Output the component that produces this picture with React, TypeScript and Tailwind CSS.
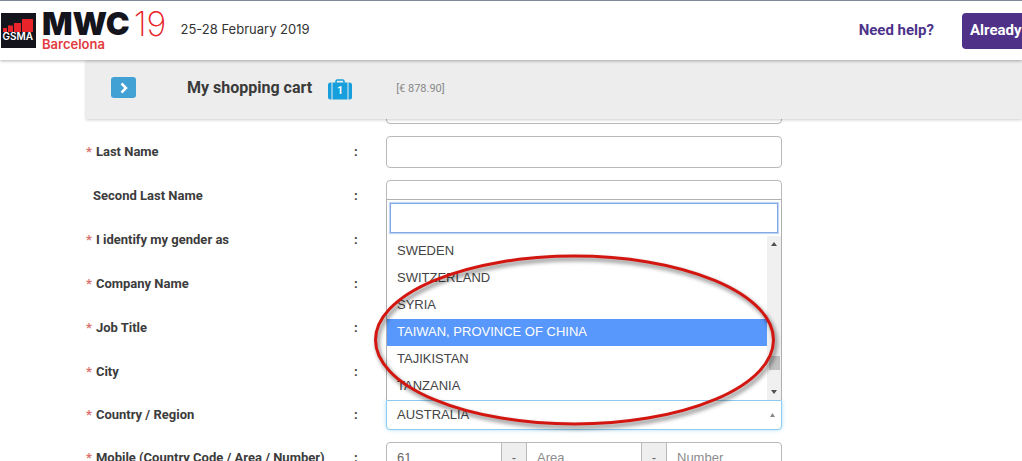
import React, { useState } from 'react';

interface FieldRowProps {
  label: string;
  htmlFor: string;
  required?: boolean;
  children?: React.ReactNode;
}

const countries = [
  'SWEDEN',
  'SWITZERLAND',
  'SYRIA',
  'TAIWAN, PROVINCE OF CHINA',
  'TAJIKISTAN',
  'TANZANIA',
];

const inputClass =
  'block h-8 w-full rounded border border-[#b9b9b9] bg-white px-2.5 text-[13px] text-[#555] outline-none placeholder:text-[#8c8c8c]';

const GsmaLogo: React.FC = () => (
  <svg width="35" height="35" viewBox="0 0 35 35" className="shrink-0" aria-hidden="true">
    <rect width="35" height="35" fill="#14141c" />
    <rect x="2" y="15" width="4" height="4" fill="#e8232a" />
    <rect x="7" y="12.500" width="5" height="6.500" fill="#e8232a" />
    <rect x="13" y="10" width="7" height="9" fill="#e8232a" />
    <rect x="21" y="6" width="11" height="13" fill="#e8232a" />
    <text x="1.5" y="27" fontFamily="Inter, sans-serif" fontSize="10" fontWeight="600" fill="#fff">GSMA</text>
  </svg>
);

const Suitcase: React.FC = () => (
  <svg width="24" height="21" viewBox="0 0 24 21" className="shrink-0" role="img" aria-label="1 item">
    <path d="M8 4V2.2Q8 1 9.2 1h5.6Q16 1 16 2.2V4" fill="none" stroke="#169fdc" strokeWidth="1.500" />
    <path d="M3.500 3.500v17H2.500Q0 20.500 0 18V6Q0 3.500 2.500 3.500z" fill="#169fdc" />
    <rect x="4.500" y="3.500" width="15" height="17" fill="#169fdc" />
    <path d="M20.500 3.500v17h1Q24 20.500 24 18V6Q24 3.500 21.500 3.500z" fill="#169fdc" />
    <text x="12" y="15" textAnchor="middle" fontFamily="Roboto, sans-serif" fontSize="10" fontWeight="700" fill="#fff">1</text>
  </svg>
);

const FieldRow: React.FC<FieldRowProps> = ({ label, htmlFor, required = true, children }) => (
  <div className="flex items-center">
    <div className="flex w-[300px] shrink-0 items-center text-[13px] font-bold text-[#3c3c3c]">
      <label htmlFor={htmlFor} className={required ? 'w-[268px]' : 'w-[268px] pl-[7px]'}>
        {required && <span className="mr-1 text-[#d9706c]">*</span>}
        {label}
      </label>
      <span>:</span>
    </div>
    <div className="relative min-w-0 max-w-[396px] flex-1">{children}</div>
  </div>
);

const CountryField: React.FC = () => {
  const [selected, setSelected] = useState('TAIWAN, PROVINCE OF CHINA');
  const [search, setSearch] = useState('');

  const filtered = countries.filter(c => c.toLowerCase().includes(search.toLowerCase()));

  return (
    <>
      <button
        id="country"
        type="button"
        aria-haspopup="listbox"
        aria-expanded="true"
        className="flex h-[30px] w-full items-center justify-between rounded-b border border-[#8ccbee] bg-white pl-2.5 pr-1.5 text-[13px] text-[#444] shadow-[0_0_4px_#b5e0f7]"
      >
        <span>AUSTRALIA</span>
        <svg width="5" height="4" viewBox="0 0 5 4" aria-hidden="true">
          <path d="M0 4L2.500 0L5 4z" fill="#888" />
        </svg>
      </button>

      <div className="absolute bottom-full left-0 z-10 w-full border border-b-0 border-[#b0b0b0] bg-white">
        <div className="p-[3px]">
          <input
            type="text"
            aria-label="Search country"
            value={search}
            onChange={e => setSearch(e.target.value)}
            className="block h-[30px] w-full border border-[#7fa9e4] px-2 text-[13px] shadow-[0_0_1px_1px_#c3d7f4] outline-none"
          />
        </div>
        <div className="flex">
          <ul role="listbox" className="min-w-0 flex-1 pt-0.5 text-[13px] text-[#444]">
            {filtered.map(c => (
              <li
                key={c}
                role="option"
                aria-selected={c === selected}
                onClick={() => setSelected(c)}
                className={
                  c === selected
                    ? 'h-[27px] bg-[#5897fb] pl-2.5 leading-[26px] text-white'
                    : 'h-[27px] pl-2.5 leading-[26px]'
                }
              >
                {c}
              </li>
            ))}
          </ul>
          <div className="flex w-3.5 flex-col items-center justify-between bg-[#f0f0f0] py-1.5">
            <svg width="6" height="4" viewBox="0 0 6 4" aria-hidden="true">
              <path d="M0 4L3 0L6 4z" fill="#505050" />
            </svg>
            <div className="mt-auto mb-5 h-3.5 w-[11px] bg-[#c1c1c1]" />
            <svg width="6" height="4" viewBox="0 0 6 4" aria-hidden="true">
              <path d="M0 0L3 4L6 0z" fill="#505050" />
            </svg>
          </div>
        </div>
      </div>

      {/* hand-drawn marker around the highlighted options */}
      <svg
        width="416"
        height="190"
        viewBox="0 0 416 190"
        className="pointer-events-none absolute -bottom-1 -left-4 z-20 drop-shadow-[2px_3px_2px_rgba(0,0,0,0.55)]"
        aria-hidden="true"
      >
        <ellipse cx="204.500" cy="96" rx="199" ry="84" fill="none" stroke="#d3160f" strokeWidth="3" />
      </svg>
    </>
  );
};

const App: React.FC = () => {
  return (
    <div className="flex h-screen flex-col overflow-hidden bg-white font-['Roboto',sans-serif]">
      <header className="relative z-30 flex h-[60px] shrink-0 items-center border-t border-[#7f8a9b] bg-white pl-px shadow-[0_1px_3px_rgba(0,0,0,0.3)]">
        <GsmaLogo />
        <div className="mb-0.5 ml-1.5 font-['Inter',sans-serif]">
          <div className="flex items-center leading-[28px]">
            <span className="text-[32px] font-black text-[#14141c]">MWC</span>
            <span className="ml-1 text-[34px] font-extralight text-[#e8232a]">19</span>
          </div>
          <div className="text-[13px] font-semibold leading-[12px] text-[#e23a3e]">Barcelona</div>
        </div>
        <p className="mb-0.5 ml-3.5 whitespace-nowrap font-['Inter',sans-serif] text-[13px] text-[#333]">25-28 February 2019</p>
        <a href="#help" className="ml-auto whitespace-nowrap text-[15px] font-bold text-[#4d3389]">Need help?</a>
        <button
          type="button"
          className="ml-7 h-9 w-[60px] overflow-hidden rounded-l bg-[#4f3188] pl-2 text-left text-[15px] font-bold text-white"
        >
          Already
        </button>
      </header>

      <section className="relative z-20 ml-[86px] flex h-[59px] shrink-0 items-center bg-[#ededed] pl-[25px] shadow-[0_1px_3px_rgba(0,0,0,0.2)]">
        <button
          type="button"
          aria-label="Expand cart"
          className="mb-1 flex h-[21px] w-[25px] items-center justify-center rounded-[3px] bg-[#41a1d5]"
        >
          <svg width="8" height="12" viewBox="0 0 8 12" aria-hidden="true">
            <path d="M1.500 1.500L6 6L1.500 10.500" fill="none" stroke="#fff" strokeWidth="2.500" />
          </svg>
        </button>
        <h2 className="mb-1 ml-[51px] mr-4 whitespace-nowrap text-[16px] font-bold text-[#3a3a3a]">My shopping cart</h2>
        <Suitcase />
        <span className="ml-11 text-[11px] text-[#888]">[€ 878.90]</span>
      </section>

      <form className="relative -mt-[27px] flex flex-col gap-3 pl-[86px] pr-4">
        <div className="flex">
          <div className="w-[300px] shrink-0" />
          <div className="max-w-[396px] flex-1">
            <input type="text" aria-label="First Name" className={inputClass} />
          </div>
        </div>
        <FieldRow label="Last Name" htmlFor="last-name">
          <input id="last-name" type="text" className={inputClass} />
        </FieldRow>
        <FieldRow label="Second Last Name" htmlFor="second-last-name" required={false}>
          <input id="second-last-name" type="text" className={inputClass} />
        </FieldRow>
        <FieldRow label="I identify my gender as" htmlFor="gender">
          <select id="gender" className="block h-8 w-full rounded border border-[#b9b9b9]" />
        </FieldRow>
        <FieldRow label="Company Name" htmlFor="company">
          <input id="company" type="text" className={inputClass} />
        </FieldRow>
        <FieldRow label="Job Title" htmlFor="job-title">
          <input id="job-title" type="text" className={inputClass} />
        </FieldRow>
        <FieldRow label="City" htmlFor="city">
          <input id="city" type="text" className={inputClass} />
        </FieldRow>
        <FieldRow label="Country / Region" htmlFor="country">
          <div className="font-['Liberation_Sans',sans-serif]">
            <CountryField />
          </div>
        </FieldRow>
        <FieldRow label="Mobile (Country Code / Area / Number)" htmlFor="mobile-code">
          <div className="flex h-8 overflow-hidden rounded border border-[#b9b9b9] font-['Liberation_Sans',sans-serif] text-[13px] text-[#666]">
            <input id="mobile-code" type="text" defaultValue="61" className="min-w-0 flex-1 px-2.5 outline-none" />
            <span className="flex w-[26px] items-center justify-center border-x border-[#b9b9b9] bg-[#eee]">-</span>
            <input type="text" aria-label="Area" placeholder="Area" className="min-w-0 flex-1 px-2.5 outline-none placeholder:text-[#8c8c8c]" />
            <span className="flex w-[26px] items-center justify-center border-x border-[#b9b9b9] bg-[#eee]">-</span>
            <input type="text" aria-label="Number" placeholder="Number" className="min-w-0 flex-1 px-2.5 outline-none placeholder:text-[#8c8c8c]" />
          </div>
        </FieldRow>
      </form>
    </div>
  );
};

export default App;
